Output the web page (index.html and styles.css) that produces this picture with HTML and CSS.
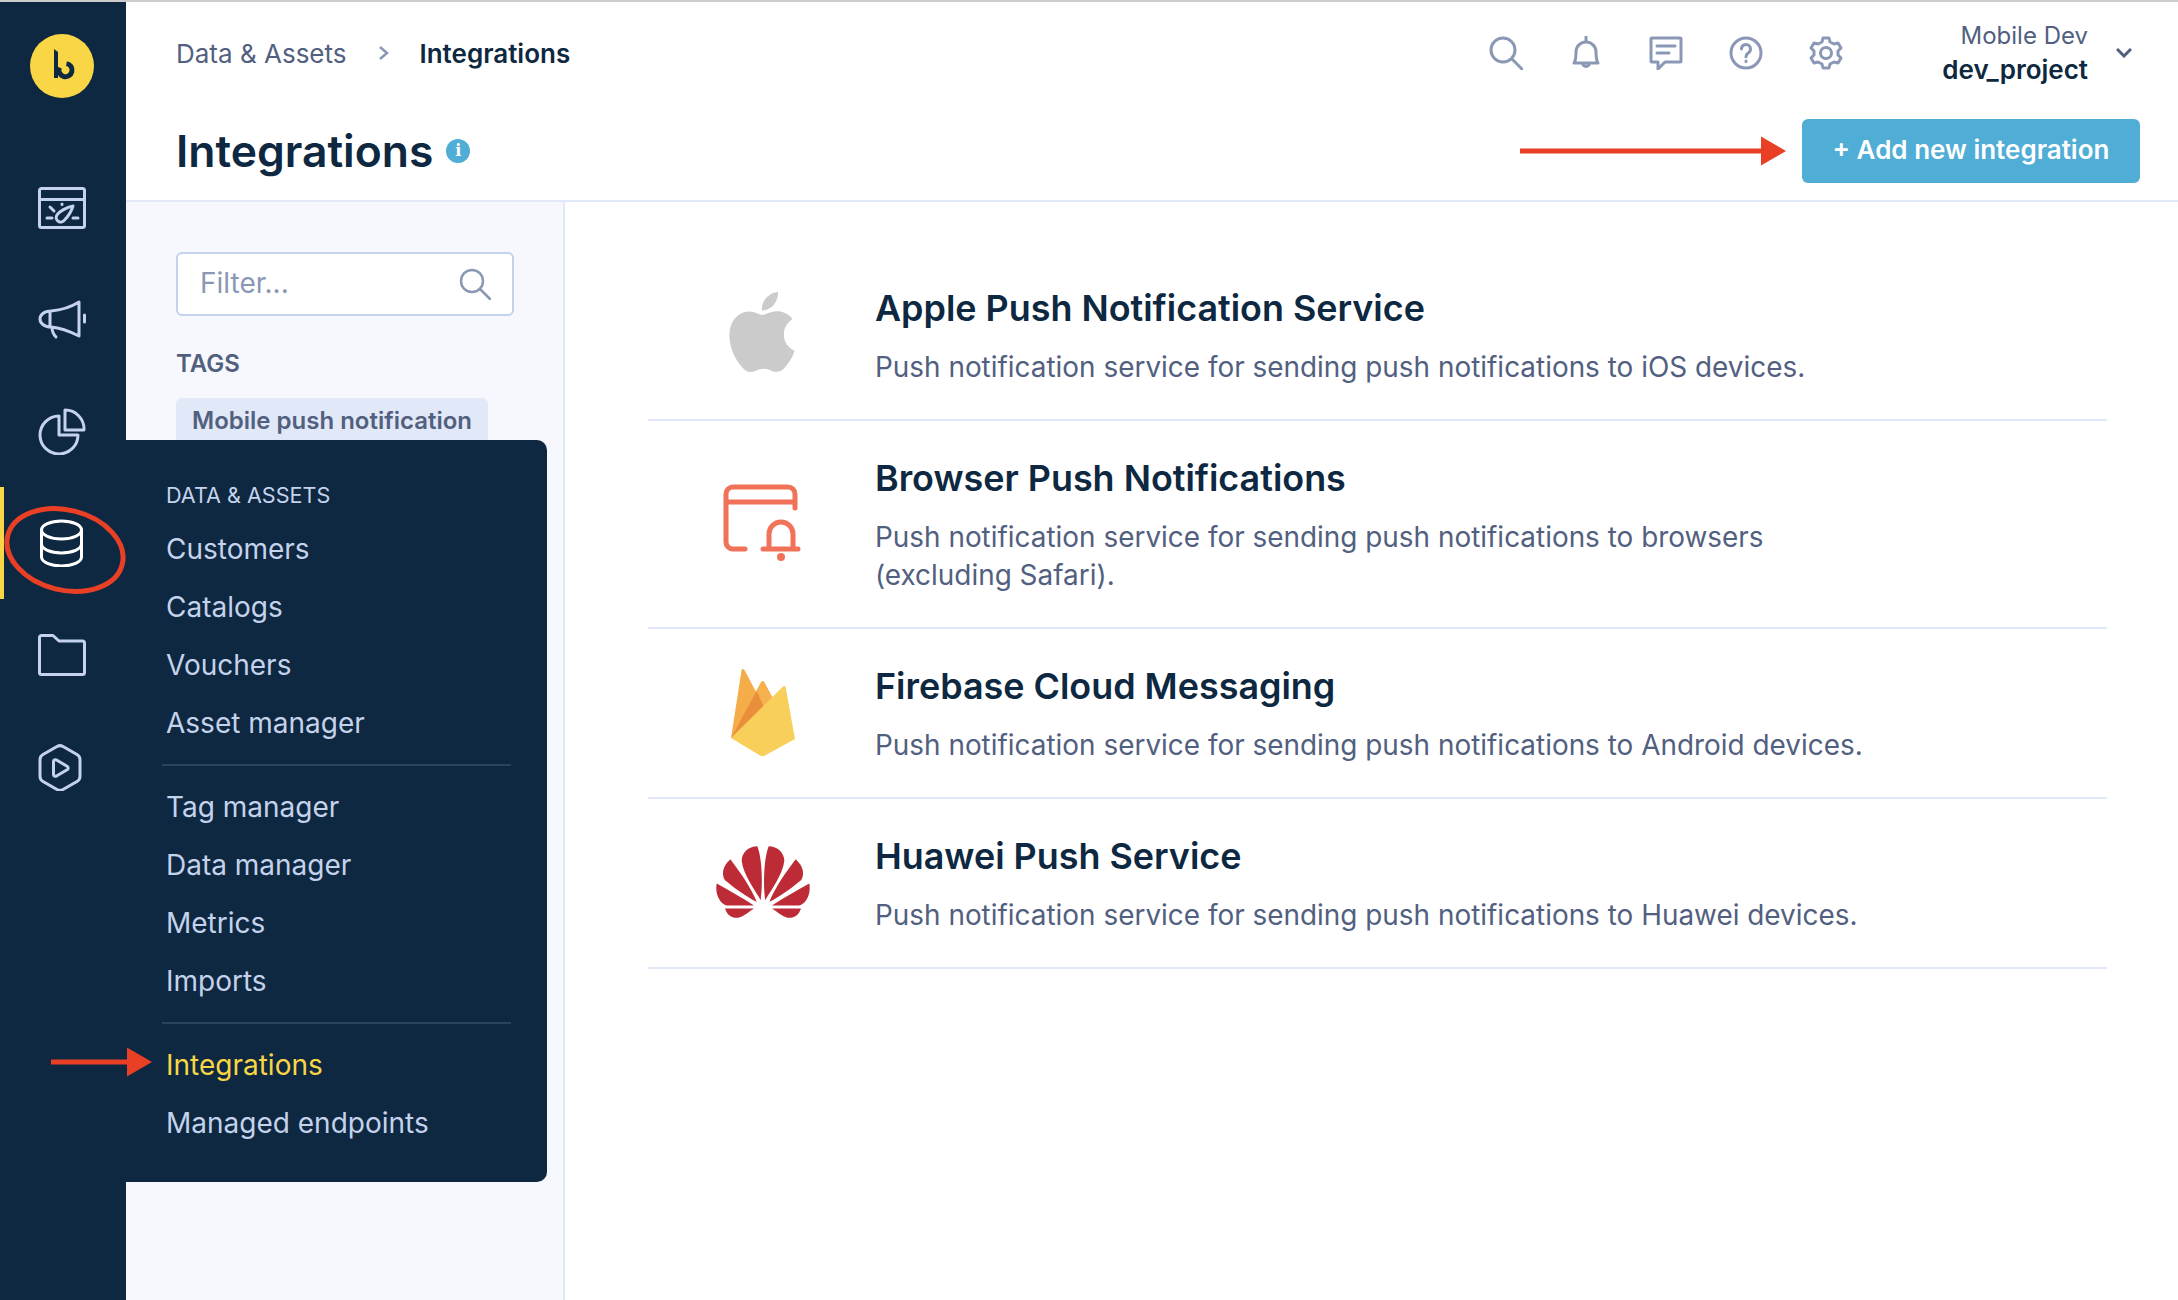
FILE: index.html
```html
<!DOCTYPE html>
<html lang="en">
<head>
<meta charset="utf-8">
<title>Integrations</title>
<link rel="stylesheet" href="styles.css">
</head>
<body>
<div class="app">
  <nav class="rail">
    <div class="logo">
      <svg class="logo-glyph" viewBox="0 0 64 64" width="64" height="64"><path d="M24 15l4 3v26h-4z" fill="#0d2840"/><path d="M36.500 29.600A6.600 6.600 0 1 1 29.400 33.500" fill="none" stroke="#0d2840" stroke-width="5"/></svg>
    </div>
    <a class="rail-item"><svg class="ri" viewBox="0 0 48 48" width="48" height="48"><path d="M3.500 5.500h41a2 2 0 0 1 2 2v35a2 2 0 0 1-2 2h-41a2 2 0 0 1-2-2v-35a2 2 0 0 1 2-2zM1.500 16.500h45M9 35h5M35 35h5M12 24l4 4M24 21v.5M35 23c-6 1-15 6-16.500 10a4.500 4.500 0 0 0 8 4c4-4 7-9 8.500-14z"/></svg></a>
    <a class="rail-item"><svg class="ri" viewBox="0 0 48 48" width="48" height="48"><path d="M41 7v34C33 37 24 33 13 32 6 32 2 28 2 24s4-8 11-8C24 15 33 12 41 7zM12 16v16M14 32c0 4 2 8 4 10M46.500 20v7"/></svg></a>
    <a class="rail-item"><svg class="ri" viewBox="0 0 48 48" width="48" height="48"><path d="M21 9A19 19 0 1 0 40 28H21zM27 3a19 19 0 0 1 19 20H27z"/></svg></a>
    <a class="rail-item active"><svg class="ri white" viewBox="0 0 48 48" width="48" height="48"><ellipse cx="23.500" cy="11" rx="20" ry="9"/><path d="M3.500 11v27c0 5 9 9 20 9s20-4 20-9V11M3.500 25c0 5 9 9 20 9s20-4 20-9"/></svg></a>
    <a class="rail-item"><svg class="ri" viewBox="0 0 48 48" width="48" height="48"><path d="M3.500 4.500H15l6 5.500h23.500a2 2 0 0 1 2 2v29.500a2 2 0 0 1-2 2h-41a2 2 0 0 1-2-2v-35a2 2 0 0 1 2-2z"/></svg></a>
    <a class="rail-item"><svg class="ri" viewBox="0 0 48 48" width="48" height="48"><path d="M19 3.500a6 6 0 0 1 6 0l14 8a6 6 0 0 1 3 5v17a6 6 0 0 1-3 5l-14 8a6 6 0 0 1-6 0l-14-8a6 6 0 0 1-3-5v-17a6 6 0 0 1 3-5zM15.500 18.500a2 2 0 0 1 3-1.500l11 6.500a2 2 0 0 1 0 3L18.500 33a2 2 0 0 1-3-1.500z"/></svg></a>
  </nav>

  <div class="main">
    <header class="header">
      <div class="topbar">
        <div class="crumbs">
          <span class="crumb">Data &amp; Assets</span>
          <svg class="crumb-sep" viewBox="0 0 12 16" width="12" height="16"><path d="M2 2l7 6-7 6"/></svg>
          <span class="crumb-current">Integrations</span>
        </div>
        <div class="tools">
          <svg class="tool" viewBox="0 0 34 34" width="34" height="34"><circle cx="14" cy="14" r="12"/><path d="M23 23l10 10"/></svg>
          <svg class="tool" viewBox="0 0 34 34" width="34" height="34"><path d="M17 1v4M5 27c2-3 2-5 2-11a10 10 0 0 1 20 0c0 6 0 8 2 11zM13.500 27a3.500 3.500 0 0 0 7 0"/></svg>
          <svg class="tool" viewBox="0 0 34 34" width="34" height="34"><path d="M3 2h28a1 1 0 0 1 1 1v22a1 1 0 0 1-1 1H16l-7 7v-7H3a1 1 0 0 1-1-1V3a1 1 0 0 1 1-1zM8 10h18M8 17h12"/></svg>
          <svg class="tool" viewBox="0 0 34 34" width="34" height="34"><circle cx="17" cy="17" r="15"/><path d="M12.500 13a4.500 4.500 0 1 1 7 3.700c-1.500 1-2.500 2-2.500 4M17 25v.5"/></svg>
          <svg class="tool" viewBox="0 0 34 34" width="34" height="34"><circle cx="17" cy="17" r="5.500"/><path d="M14 2h6l1 4 4 2 4-1 3 5-3 3v4l3 3-3 5-4-1-4 2-1 4h-6l-1-4-4-2-4 1-3-5 3-3v-4l-3-3 3-5 4 1 4-2z" stroke-linejoin="round"/></svg>
        </div>
        <div class="account">
          <div class="account-names">
            <div class="account-org">Mobile Dev</div>
            <div class="account-project">dev_project</div>
          </div>
          <svg class="account-chev" viewBox="0 0 16 10" width="16" height="10"><path d="M1 1l7 7 7-7"/></svg>
        </div>
      </div>
      <div class="titlebar">
        <h1 class="title">Integrations</h1>
        <span class="info">i</span>
        <button class="add-btn">+ Add new integration</button>
      </div>
    </header>

    <div class="body">
      <aside class="panel">
        <div class="filter">
          <span class="filter-text">Filter...</span>
          <svg class="filter-icon" viewBox="0 0 32 32" width="32" height="32"><circle cx="13" cy="13" r="11"/><path d="M21 21l10 10"/></svg>
        </div>
        <div class="tags-label">TAGS</div>
        <div class="tag">Mobile push notification</div>
      </aside>

      <section class="list">
        <article class="row">
          <div class="row-icon apple"><svg viewBox="0 0 24 24" width="80" height="80"><path fill="#cbcbcb" d="M12.152 6.896c-.948 0-2.415-1.078-3.960-1.040-2.040.027-3.910 1.183-4.961 3.014-2.117 3.675-.546 9.103 1.519 12.090 1.013 1.454 2.208 3.090 3.792 3.039 1.520-.065 2.090-.987 3.935-.987 1.831 0 2.350.987 3.960.948 1.637-.026 2.676-1.480 3.676-2.948 1.156-1.688 1.636-3.325 1.662-3.415-.039-.013-3.182-1.221-3.220-4.857-.026-3.040 2.480-4.494 2.597-4.559-1.429-2.090-3.623-2.324-4.390-2.376-2-.156-3.675 1.090-4.610 1.090zM15.530 3.830c.843-1.012 1.400-2.427 1.245-3.830-1.207.052-2.662.805-3.532 1.818-.780.896-1.454 2.338-1.273 3.714 1.338.104 2.715-.688 3.559-1.701"/></svg></div>
          <div class="row-text">
            <h2 class="row-title">Apple Push Notification Service</h2>
            <p class="row-desc">Push notification service for sending push notifications to iOS devices.</p>
          </div>
        </article>
        <article class="row">
          <div class="row-icon"><svg class="bell-ico" viewBox="0 0 78 78" width="78" height="78"><path d="M22 65H10a7 7 0 0 1-7-7V10a7 7 0 0 1 7-7h55a7 7 0 0 1 7 7v14M3 18h69M46 64V50a12 12 0 0 1 24 0v14M40 65h35"/><circle cx="58" cy="73" r="4" fill="#f07258" stroke="none"/></svg></div>
          <div class="row-text">
            <h2 class="row-title">Browser Push Notifications</h2>
            <p class="row-desc">Push notification service for sending push notifications to browsers<br>(excluding Safari).</p>
          </div>
        </article>
        <article class="row">
          <div class="row-icon nudged"><svg viewBox="0 0 64 89" width="64" height="89"><path fill="#f5ad4a" d="M0 70L10.500 2.500c.3-1.800 2-2 3-.4L34 41z"/><path fill="#f6b04c" d="M0 70L30 14c.8-1.500 2.500-1.500 3.300 0L44 34z"/><path fill="#e98f3c" d="M0 70L25.600 23 34 41 44 34z"/><path fill="#f9cf5b" d="M0 70L52 18.500c1-1 2.500-.5 2.700 1L64 71 34 87.500c-1.500.8-3.500.8-5 0z"/></svg></div>
          <div class="row-text">
            <h2 class="row-title">Firebase Cloud Messaging</h2>
            <p class="row-desc">Push notification service for sending push notifications to Android devices.</p>
          </div>
        </article>
        <article class="row">
          <div class="row-icon nudged"><svg viewBox="108 618 282 215" width="94" height="72"><g id="hw" fill="#bc2b36"><path d="M232 618C205 618 185 638 185 662C190 705 225 750 242 780C248 740 248 660 232 618Z"/><path d="M151 657C125 680 125 705 135 720C165 745 200 770 230 785C215 745 180 695 151 657Z"/><path d="M110 730C104 765 122 792 140 796H190L222 796C185 772 145 750 110 730Z"/><path d="M135 805H222C200 820 185 833 170 833C150 833 140 820 135 805Z"/></g><use href="#hw" transform="translate(498 0) scale(-1 1)"/></svg></div>
          <div class="row-text">
            <h2 class="row-title">Huawei Push Service</h2>
            <p class="row-desc">Push notification service for sending push notifications to Huawei devices.</p>
          </div>
        </article>
      </section>
    </div>
  </div>

  <div class="menu">
    <div class="menu-group">
      <div class="menu-label">DATA &amp; ASSETS</div>
      <a class="menu-item">Customers</a>
      <a class="menu-item">Catalogs</a>
      <a class="menu-item">Vouchers</a>
      <a class="menu-item">Asset manager</a>
    </div>
    <div class="menu-group">
      <a class="menu-item">Tag manager</a>
      <a class="menu-item">Data manager</a>
      <a class="menu-item">Metrics</a>
      <a class="menu-item">Imports</a>
    </div>
    <div class="menu-group">
      <a class="menu-item current">Integrations</a>
      <a class="menu-item">Managed endpoints</a>
    </div>
  </div>

  <svg class="notes" viewBox="0 0 2178 1300" width="2178" height="1300">
    <ellipse cx="65" cy="550" rx="59" ry="40" transform="rotate(14 65 550)" fill="none" stroke="#e94025" stroke-width="5"/>
    <path d="M1520 148.500h241v-12l25 14.500-25 14.500v-12h-241z" fill="#e94025"/>
    <path d="M51 1059.500h76v-12l25 14.500-25 14.500v-12H51z" fill="#e94025"/>
  </svg>
</div>
</body>
</html>
```
FILE: styles.css
```css
* { box-sizing: border-box; }
html, body { margin: 0; padding: 0; }
body { font-family: Inter, "Liberation Sans", sans-serif; color: #0d2840; background: #fff; }
.app { position: relative; width: 2178px; height: 1300px; overflow: hidden; display: flex; border-top: 2px solid #cccccc; }

.rail { width: 126px; flex: none; background: #0d2840; display: flex; flex-direction: column; padding-top: 32px; }
.logo { width: 64px; height: 64px; margin: 0 0 53px 30px; border-radius: 50%; background: #f9d646; }
.logo-glyph { display: block; }
.rail-item { height: 112px; display: flex; align-items: center; justify-content: center; padding-right: 2px; }
.rail-item.active { box-shadow: inset 4px 0 0 #f9d646; }
.ri { fill: none; stroke: #c5d2ec; stroke-width: 3; stroke-linecap: round; stroke-linejoin: round; }
.ri.white { stroke: #fff; }

.main { flex: 1; display: flex; flex-direction: column; min-width: 0; }
.header { height: 200px; flex: none; border-bottom: 2px solid #e1e9f8; padding: 0 38px 0 50px; }
.topbar { height: 102px; display: flex; align-items: center; }
.crumbs { display: flex; align-items: center; flex: 1; }
.crumb { font-size: 26px; color: #52607f; }
.crumb-sep { margin: 0 30px 0 31px; fill: none; stroke: #8a97b5; stroke-width: 2.500; }
.crumb-current { font-size: 26px; font-weight: 600; color: #0d2840; }
.tools { display: flex; gap: 46px; margin-right: 99px; }
.tool { fill: none; stroke: #8a97b5; stroke-width: 3; stroke-linecap: round; stroke-linejoin: round; }
.account { display: flex; align-items: center; gap: 28px; }
.account-names { text-align: right; }
.account-org { font-size: 24px; line-height: 34px; color: #52607f; }
.account-project { font-size: 26px; line-height: 34px; font-weight: 600; }
.account-chev { margin-right: 8px; fill: none; stroke: #52607f; stroke-width: 3; }

.titlebar { height: 96px; padding-bottom: 2px; display: flex; align-items: center; }
.title { margin: 0; font-size: 44.400px; font-weight: 600; line-height: 60px; }
.info { width: 24px; height: 24px; margin-left: 13px; border-radius: 50%; background: #4fadd6; color: #fff; font-family: "DejaVu Serif", serif; font-size: 16px; font-weight: 700; line-height: 24px; text-align: center; }
.add-btn { margin-left: auto; width: 338px; height: 64px; padding: 0 0 3px; border: 0; border-radius: 6px; background: #4fadd6; color: #fff; font-family: inherit; font-size: 26px; font-weight: 600; }

.body { flex: 1; display: flex; min-height: 0; }
.panel { width: 439px; flex: none; background: #f6f8fd; border-right: 2px solid #e1e9f8; padding: 50px 0 0 50px; }
.filter { width: 338px; height: 64px; display: flex; align-items: center; justify-content: space-between; padding: 0 21px 0 22px; background: #fff; border: 2px solid #c5d2ec; border-radius: 6px; }
.filter-text { margin-top: -2px; font-size: 28px; color: #8a97b5; }
.filter-icon { fill: none; stroke: #8a97b5; stroke-width: 2.500; stroke-linecap: round; }
.tags-label { margin-top: 33px; font-size: 24px; line-height: 30px; font-weight: 600; color: #52607f; }
.tag { width: 312px; height: 60px; margin-top: 19px; padding: 6px 16px; background: #e1e8f7; border-radius: 6px; font-size: 24px; line-height: 34px; font-weight: 600; color: #52607f; white-space: nowrap; }

.list { flex: 1; padding: 49px 71px 0 83px; }
.row { display: flex; align-items: center; padding: 38px 0 33px; border-bottom: 2px solid #e1e9f8; }
.row-icon { width: 227px; flex: none; display: flex; justify-content: center; margin-bottom: 7px; }
.row-icon svg { display: block; }
.row-icon.apple { margin-bottom: 12px; }
.row-icon.nudged { padding-left: 2px; }
.bell-ico { fill: none; stroke: #f07258; stroke-width: 5; stroke-linecap: round; stroke-linejoin: round; }
.row-title { margin: 0 0 21px; font-size: 35.900px; line-height: 38px; font-weight: 600; }
.row-desc { margin: 0; font-size: 27.920px; line-height: 38px; color: #52607f; }

.menu { position: absolute; left: 126px; top: 438px; width: 421px; height: 742px; padding: 36px 26px 0 36px; background: #0d2840; border-radius: 0 10px 10px 0; }
.menu-group { width: 349px; margin-bottom: 12px; padding-bottom: 12px; border-bottom: 2px solid #2a435a; }
.menu-group:last-child { border-bottom: 0; }
.menu-label { margin-bottom: 6px; padding-left: 4px; font-size: 21.600px; line-height: 38px; color: #c5d2ec; }
.menu-item { display: block; padding-left: 4px; font-size: 28px; line-height: 58px; color: #c5d2ec; }
.menu-item.current { color: #f9d646; }

.notes { position: absolute; left: 0; top: -2px; pointer-events: none; }
```
